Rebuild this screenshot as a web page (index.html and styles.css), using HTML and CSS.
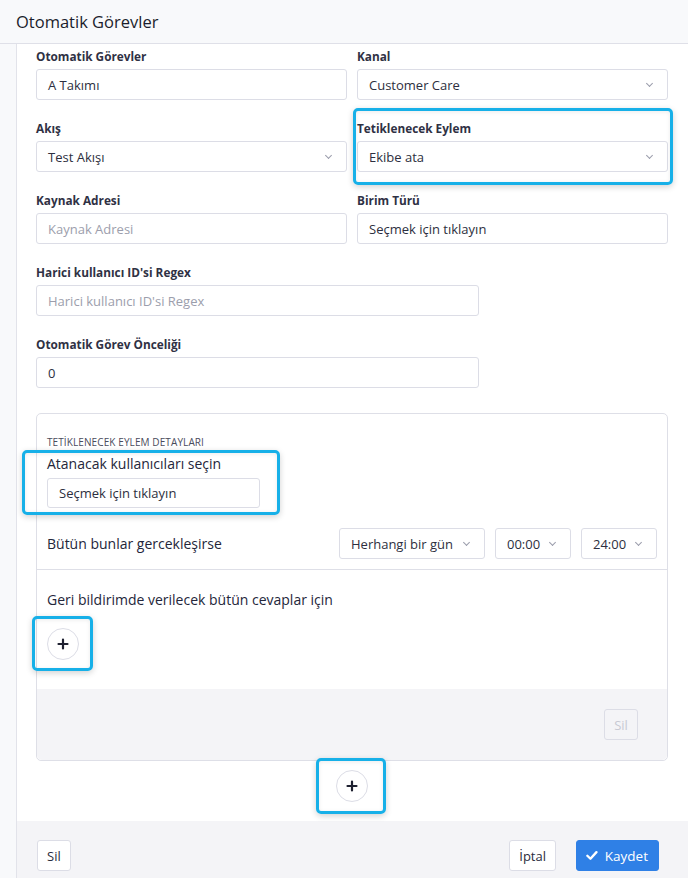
FILE: index.html
```html
<!DOCTYPE html>
<html lang="tr">
<head>
<meta charset="utf-8">
<title>Otomatik Görevler</title>
<link rel="stylesheet" href="styles.css">
</head>
<body>
<div class="modal">
  <header class="modal-header">Otomatik Görevler</header>
  <div class="modal-main">
    <div class="side"></div>
    <div class="content">
      <div class="form-grid">
        <div class="field">
          <label class="label">Otomatik Görevler</label>
          <div class="input">A Takımı</div>
        </div>
        <div class="field">
          <label class="label">Kanal</label>
          <div class="input select">Customer Care<span class="chev"></span></div>
        </div>
        <div class="field">
          <label class="label">Akış</label>
          <div class="input select">Test Akışı<span class="chev"></span></div>
        </div>
        <div class="field hl hl-action">
          <label class="label">Tetiklenecek Eylem</label>
          <div class="input select">Ekibe ata<span class="chev"></span></div>
        </div>
        <div class="field">
          <label class="label">Kaynak Adresi</label>
          <div class="input placeholder">Kaynak Adresi</div>
        </div>
        <div class="field">
          <label class="label">Birim Türü</label>
          <div class="input">Seçmek için tıklayın</div>
        </div>
        <div class="field narrow">
          <label class="label">Harici kullanıcı ID'si Regex</label>
          <div class="input placeholder">Harici kullanıcı ID'si Regex</div>
        </div>
        <div class="field narrow">
          <label class="label">Otomatik Görev Önceliği</label>
          <div class="input">0</div>
        </div>
      </div>

      <section class="details">
        <div class="details-top">
          <div class="section-title">TETİKLENECEK EYLEM DETAYLARI</div>
          <div class="hl hl-users">
            <div class="sub-label">Atanacak kullanıcıları seçin</div>
            <div class="input users-input">Seçmek için tıklayın</div>
          </div>
          <div class="cond-row">
            <span class="cond-text">Bütün bunlar gercekleşirse</span>
            <div class="cond-selects">
              <div class="input select small day">Herhangi bir gün<span class="chev"></span></div>
              <div class="input select small time">00:00<span class="chev"></span></div>
              <div class="input select small time">24:00<span class="chev"></span></div>
            </div>
          </div>
        </div>
        <div class="details-answers">
          <div class="answers-label">Geri bildirimde verilecek bütün cevaplar için</div>
          <div class="plus-wrap hl hl-plus-inner">
            <button class="plus-btn" type="button"><svg width="12" height="12" viewBox="0 0 12 12"><path d="M6 1.5v9M1.5 6h9" stroke="#1e2030" stroke-width="2.2" stroke-linecap="round"/></svg></button>
          </div>
        </div>
        <div class="details-foot">
          <button class="btn btn-disabled" type="button">Sil</button>
        </div>
      </section>

      <div class="outer-plus">
        <div class="plus-wrap hl hl-plus-outer">
          <button class="plus-btn" type="button"><svg width="12" height="12" viewBox="0 0 12 12"><path d="M6 1.5v9M1.5 6h9" stroke="#1e2030" stroke-width="2.2" stroke-linecap="round"/></svg></button>
        </div>
      </div>
    </div>
  </div>
  <footer class="modal-footer">
    <div class="side"></div>
    <div class="footer-bar">
      <button class="btn" type="button">Sil</button>
      <div class="footer-right">
        <button class="btn" type="button">İptal</button>
        <button class="btn btn-primary" type="button"><svg width="13" height="11" viewBox="0 0 13 11"><path d="M1.5 5.8l3.4 3.3L11.5 1.8" fill="none" stroke="#fff" stroke-width="2.6" stroke-linecap="round" stroke-linejoin="round"/></svg>Kaydet</button>
      </div>
    </div>
  </footer>
</div>
</body>
</html>
```

FILE: styles.css
```css
* { box-sizing: border-box; }
html, body { margin: 0; padding: 0; }
body {
  font-family: "Open Sans", "Liberation Sans", sans-serif;
  color: #2a2c3d;
  background: #ffffff;
  width: 688px;
  height: 878px;
  overflow: hidden;
}
.modal { display: flex; flex-direction: column; height: 878px; }
.modal-header {
  height: 44px;
  background: #f8f9fb;
  border-bottom: 1px solid #dfe0e8;
  padding: 0 16px;
  display: flex;
  align-items: center;
  font-size: 16.5px;
  font-weight: 500;
  color: #1b1d2c;
  flex: none;
}
.modal-main { display: flex; flex: none; }
.side {
  width: 17px;
  flex: none;
  background: #f8f9fb;
  border-right: 1px solid #e2e3ea;
}
.content {
  flex: 1;
  padding: 4px 20px 0 19px;
}
.form-grid {
  display: grid;
  grid-template-columns: 311px 311px;
  column-gap: 10px;
  row-gap: 20px;
}
.field { display: flex; flex-direction: column; position: relative; }
.field.narrow { grid-column: 1 / span 2; width: 443px; }
.label {
  font-size: 11.8px;
  line-height: 16px;
  font-weight: 700;
  color: #2f3144;
  margin-bottom: 5px;
}
.input {
  height: 31px;
  border: 1px solid #dcdde6;
  border-radius: 3px;
  background: #fff;
  padding: 0 11px;
  display: flex;
  align-items: center;
  font-size: 13px;
  color: #2d2f40;
  position: relative;
}
.input.placeholder { color: #9c9eac; }
.select { justify-content: space-between; }
.chev {
  width: 5px;
  height: 5px;
  border-right: 1px solid #9a9cab;
  border-bottom: 1px solid #9a9cab;
  transform: rotate(45deg);
  margin: 0 4px 3px 8px;
  flex: none;
}
/* highlight annotations */
.hl { position: relative; }
.hl::after {
  content: "";
  position: absolute;
  border: 3px solid #17b0e8;
  border-radius: 5px;
  box-shadow: 0 2px 6px rgba(0,0,0,0.18), inset 0 1px 4px rgba(0,0,0,0.08);
  pointer-events: none;
}
.hl-action::after { left: -4px; right: -5px; top: -12px; bottom: -13px; }
.hl-users::after { left: -25px; right: -20px; top: -4px; bottom: -7px; }
.hl-plus-inner::after { left: -15px; right: -14px; top: -12px; bottom: -11px; }
.hl-plus-outer::after { left: -20px; right: -18px; top: -12px; bottom: -12px; }

.details {
  margin-top: 25px;
  width: 632px;
  border: 1px solid #dedfe7;
  border-radius: 5px;
  background: #fff;
}
.details-top { padding: 21px 10px 10px 10px; }
.section-title {
  font-size: 10px;
  line-height: 14px;
  color: #4a4c5c;
  letter-spacing: 0.1px;
}
.sub-label {
  font-size: 14px;
  line-height: 20px;
  color: #24263a;
  margin-top: 5px;
}
.hl-users { width: 213px; }
.users-input { margin-top: 4px; height: 30px; width: 213px; }
.cond-row {
  margin-top: 20px;
  display: flex;
  justify-content: space-between;
  align-items: center;
}
.cond-text { font-size: 14px; color: #24263a; }
.cond-selects { display: flex; gap: 10px; }
.small { font-size: 13px; }
.day { width: 146px; }
.time { width: 76px; }
.details-answers {
  border-top: 1px solid #dedfe7;
  padding: 20px 10px 29px 10px;
}
.answers-label {
  font-size: 14px;
  line-height: 20px;
  color: #24263a;
}
.plus-wrap { width: 32px; height: 32px; margin-top: 18px; }
.plus-btn {
  width: 32px;
  height: 32px;
  border-radius: 50%;
  border: 1px solid #dcdde6;
  background: #fff;
  display: flex;
  align-items: center;
  justify-content: center;
  padding: 0;
}
.details-foot {
  background: #f4f4f7;
  height: 71px;
  display: flex;
  justify-content: flex-end;
  align-items: flex-start;
  padding: 20px 29px 0 0;
  border-radius: 0 0 5px 5px;
}
.btn {
  height: 31px;
  border: 1px solid #dcdde6;
  border-radius: 3px;
  background: #fff;
  font-family: "Open Sans", "Liberation Sans", sans-serif;
  font-size: 13px;
  color: #2a2c3d;
  padding: 0 9px;
  display: inline-flex;
  align-items: center;
  gap: 8px;
}
.btn-disabled {
  background: transparent;
  color: #c8c9d3;
  border-color: #dcdde6;
  width: 34px;
  justify-content: center;
  padding: 0;
}
.outer-plus {
  display: flex;
  justify-content: center;
  align-items: flex-start;
  width: 632px;
  padding-top: 9px;
  height: 60px;
}
.outer-plus .plus-wrap { margin-top: 0; }
.modal-footer { display: flex; flex: 1; }
.footer-bar {
  flex: 1;
  background: #f4f4f7;
  display: flex;
  justify-content: space-between;
  align-items: flex-start;
  padding: 19px 29px 0 20px;
}
.footer-right { display: flex; gap: 20px; }
.btn-primary {
  background: #2f80e6;
  border-color: #2f80e6;
  color: #fff;
  padding: 0 10px 0 9px;
  gap: 7px;
  font-size: 13.5px;
  width: 83px;
  justify-content: center;
}
```
